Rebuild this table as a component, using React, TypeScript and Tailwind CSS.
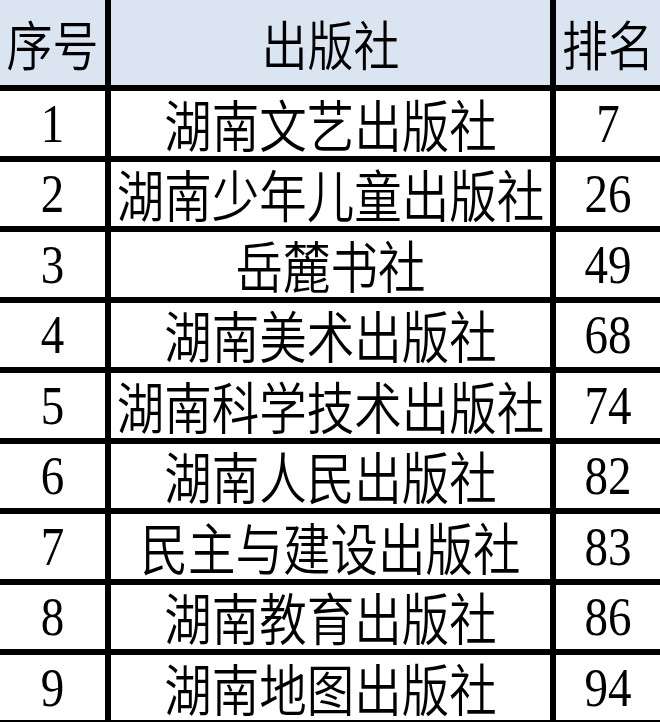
const ROWS: [string, string, string][] = [
  ["1", "湖南文艺出版社", "7"],
  ["2", "湖南少年儿童出版社", "26"],
  ["3", "岳麓书社", "49"],
  ["4", "湖南美术出版社", "68"],
  ["5", "湖南科学技术出版社", "74"],
  ["6", "湖南人民出版社", "82"],
  ["7", "民主与建设出版社", "83"],
  ["8", "湖南教育出版社", "86"],
  ["9", "湖南地图出版社", "94"],
];

const cjk = "font-['Noto_Sans_CJK_SC',sans-serif] font-[350]";
const serif = "font-['Liberation_Serif','Times_New_Roman',serif]";
// the source picture is a bit stretched vertically, so glyphs get a y-scale
const tall = "inline-block scale-y-[1.17] leading-none";

export default function App() {
  return (
    <div className="w-[660px] h-[722px] overflow-hidden bg-white">
      {/* table: black background shows through the gaps as grid lines */}
      <div className="grid grid-cols-[105px_439px_104px] grid-rows-[85px] auto-rows-[64.5px] gap-[6px] bg-black pb-[6px]">
        <div className={`flex items-center justify-center bg-[#dbe5f1] text-[46px] text-black ${cjk}`}>
          <span className={tall}>序号</span>
        </div>
        <div className={`flex items-center justify-center bg-[#dbe5f1] text-[46px] text-black ${cjk}`}>
          <span className={tall}>出版社</span>
        </div>
        <div className={`flex items-center justify-center bg-[#dbe5f1] text-[46px] text-black ${cjk}`}>
          <span className={tall}>排名</span>
        </div>

        {ROWS.map(([no, name, rank]) => (
          <div key={no} className="contents">
            <div className={`flex items-center justify-center bg-white text-[47px] text-black ${serif}`}>
              <span className={tall}>{no}</span>
            </div>
            <div className={`flex items-center justify-center bg-white text-[47.5px] text-black whitespace-nowrap ${cjk}`}>
              <span className={tall}>{name}</span>
            </div>
            <div className={`flex items-center justify-center bg-white text-[47px] text-black ${serif}`}>
              <span className={tall}>{rank}</span>
            </div>
          </div>
        ))}
      </div>
    </div>
  );
}
